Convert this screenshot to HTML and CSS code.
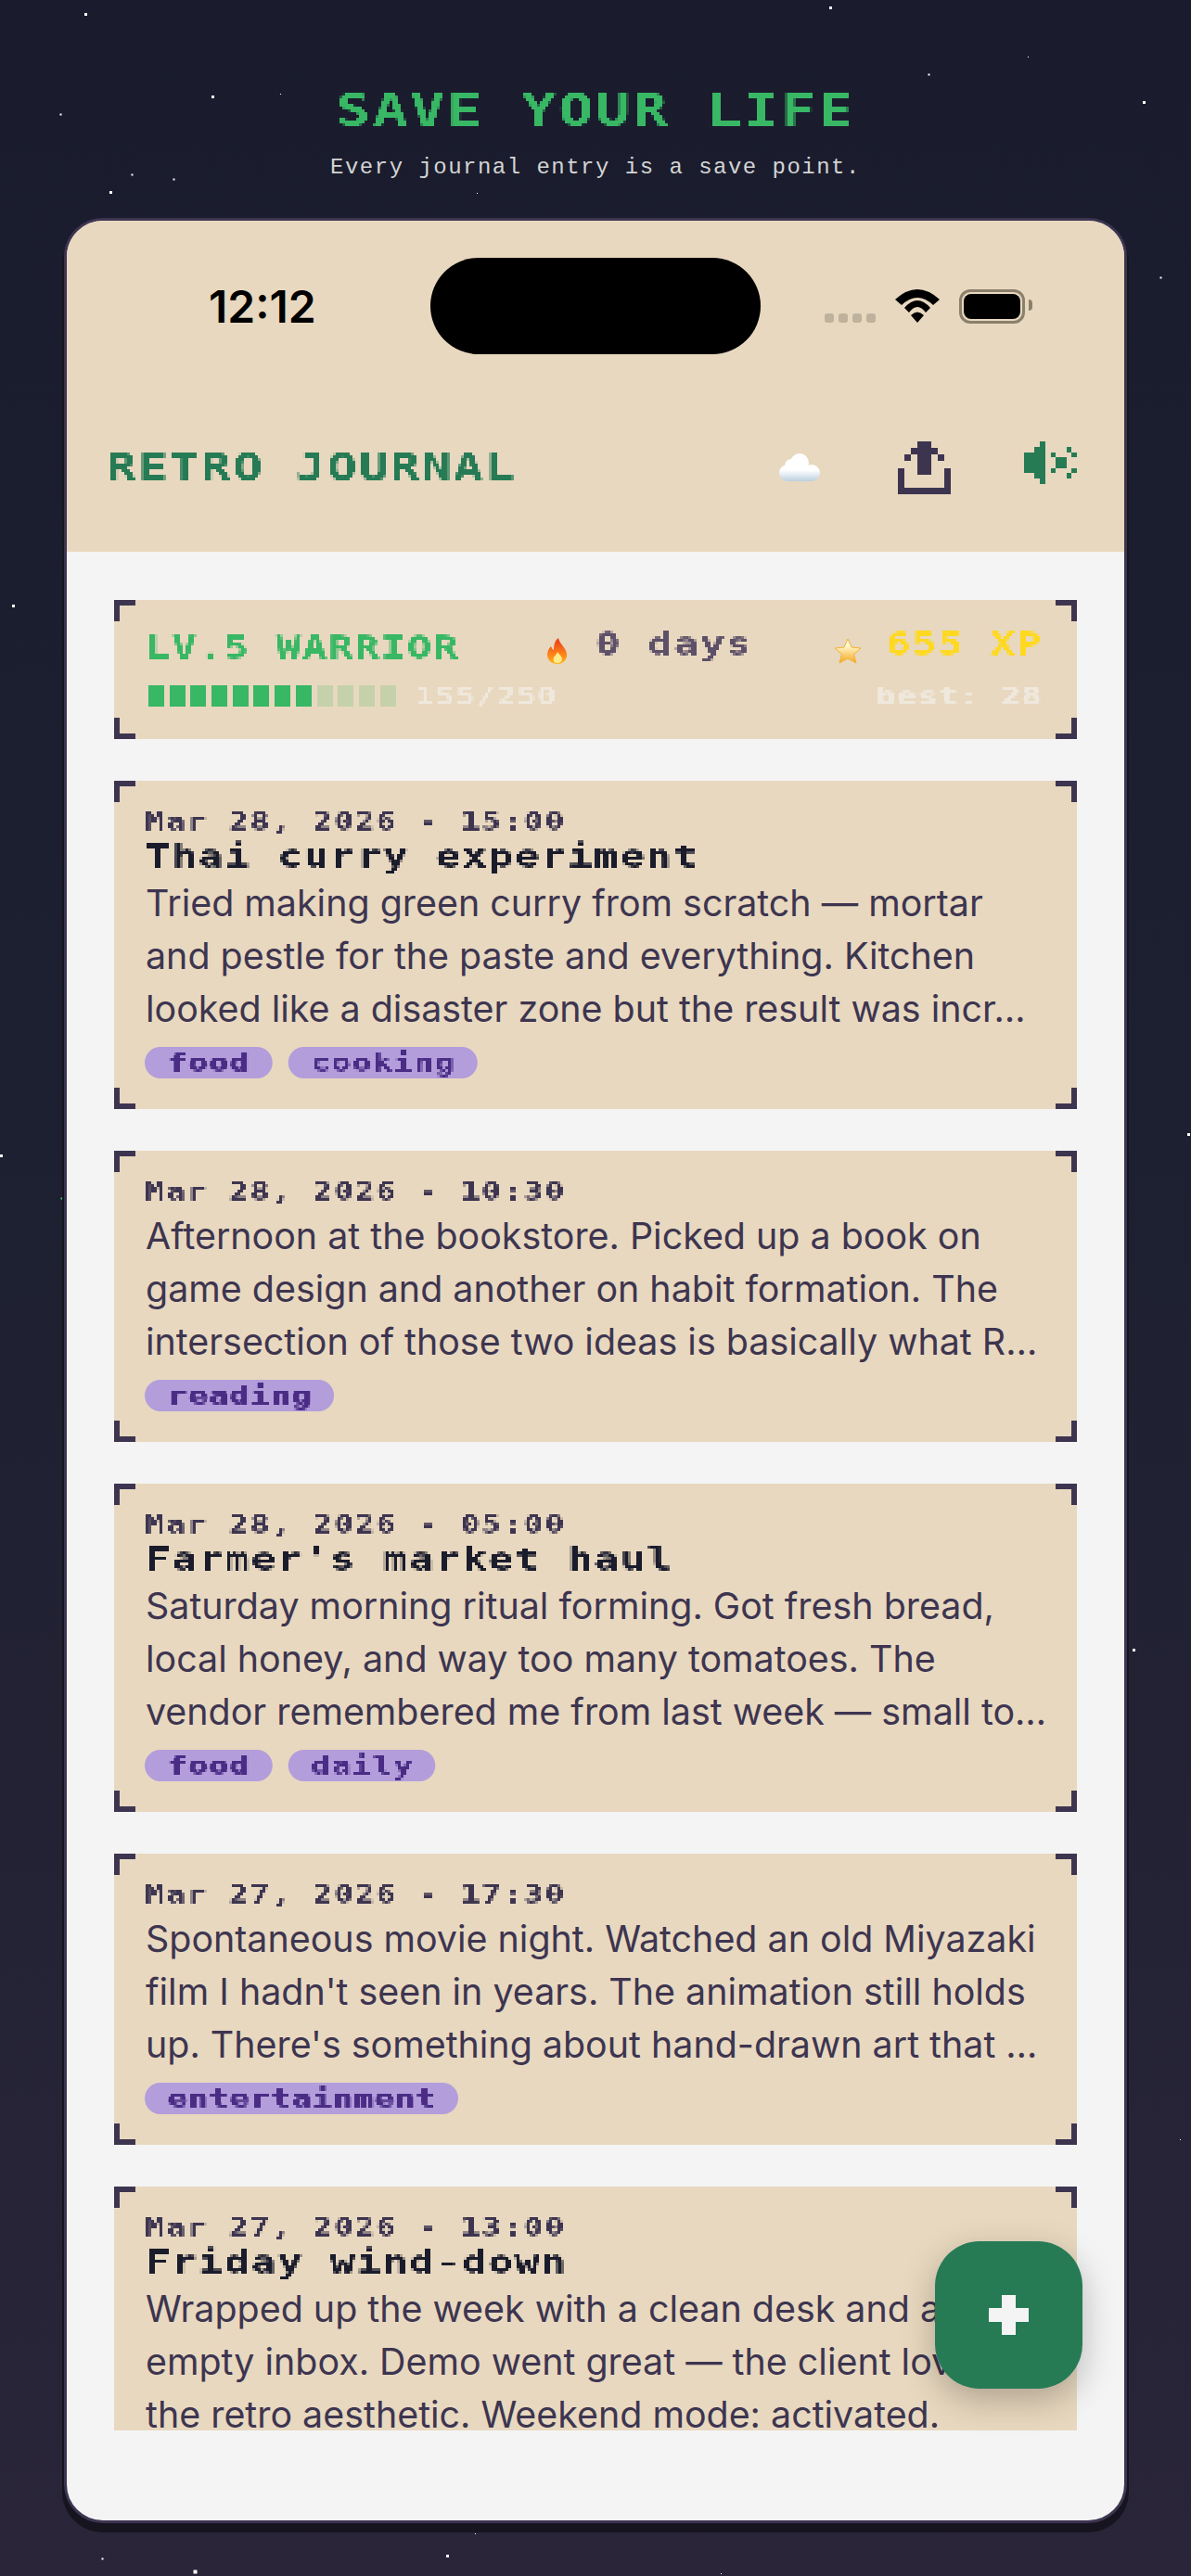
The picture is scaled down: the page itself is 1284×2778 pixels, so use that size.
FILE: index.html
```html
<!DOCTYPE html>
<html lang="en">
<head>
    <meta charset="UTF-8">
    <meta name="viewport" content="width=device-width, initial-scale=1.0">
    <title>Save Your Life</title>
    <link rel="stylesheet" href="styles.css">
</head>
<body>

    <!-- blocky look for the retro labels -->
    <svg class="defs" width="0" height="0">
        <filter id="blocks" x="0" y="0" width="100%" height="100%" color-interpolation-filters="sRGB">
            <feFlood x="1" y="1" width="1" height="1"/>
            <feComposite width="3" height="3"/>
            <feTile result="grid"/>
            <feComposite in="SourceGraphic" in2="grid" operator="in"/>
            <feMorphology operator="dilate" radius="1"/>
        </filter>
    </svg>

    <div class="stars"></div>

    <div class="intro">
        <h1 class="intro-title px">SAVE YOUR LIFE</h1>
        <p class="intro-sub">Every journal entry is a save point.</p>
    </div>

    <div class="phone">
        <header class="phone-head">
            <div class="status">
                <div class="status-time">12:12</div>
                <div class="island"></div>
                <div class="status-icons">
                    <div class="signal"><i></i><i></i><i></i><i></i></div>
                    <svg class="wifi" viewBox="0 0 48 36"><path d="M0 11Q24-11 48 11L41 17Q24 1 7 17Z"/><path d="M10 20Q24 4 38 20L33 25Q24 13 15 25Z"/><path d="M17 28Q24 21 31 28L24 36Z"/></svg>
                    <div class="battery"><div class="battery-fill"></div></div>
                </div>
            </div>
            <div class="appbar">
                <div class="brand px">RETRO JOURNAL</div>
                <div class="appbar-icons">
                    <svg class="cloud" viewBox="0 0 44 30">
                        <defs>
                            <linearGradient id="cloudfill" x1="0" y1="0" x2="0" y2="30" gradientUnits="userSpaceOnUse">
                                <stop offset="0.6" stop-color="#ffffff"/>
                                <stop offset="1" stop-color="#bcd0e0"/>
                            </linearGradient>
                        </defs>
                        <g fill="url(#cloudfill)">
                            <circle cx="22" cy="10" r="10"/>
                            <circle cx="13" cy="13" r="7"/>
                            <circle cx="9" cy="21" r="9"/>
                            <circle cx="35" cy="21" r="9"/>
                            <rect x="9" y="16" width="26" height="14"/>
                        </g>
                    </svg>
                    <svg class="upload" viewBox="0 0 8 8" shape-rendering="crispEdges"><path d="M3 0h2v5H3zM2 1h1v1H2zM5 1h1v1H5zM1 2h1v1H1zM6 2h1v1H6zM0 4h1v3h6V4h1v4H0z"/></svg>
                    <svg class="speaker" viewBox="0 0 10 8" shape-rendering="crispEdges"><path d="M0 2h2V1h1V0h1v8H3V7H2V6H0zM5 2h1v1H5zM6 3h2v2H6zM5 5h1v1H5zM8 1h1v1H8zM9 2h1v1H9zM9 5h1v1H9zM8 6h1v1H8z"/></svg>
                </div>
            </div>
        </header>

        <main class="list">
            <section class="card stats">
                <div class="stats-row">
                    <span class="level px">LV.5 WARRIOR</span>
                    <span class="stat-group streak">
                        <svg class="emoji-fire" viewBox="0 0 22 28">
                            <defs>
                                <linearGradient id="firefill" x1="0" y1="0" x2="0" y2="1">
                                    <stop offset="0" stop-color="#e8341c"/>
                                    <stop offset="0.55" stop-color="#fb7a18"/>
                                    <stop offset="1" stop-color="#ffb31a"/>
                                </linearGradient>
                            </defs>
                            <path fill="url(#firefill)" d="M12 0C13 6 20 10 21 17C22 23 17 28 11 28C5 28 0 24 0 18C0 14 2 11 4 9C5 11 5 12 7 13C7 8 8 3 12 0Z"/>
                            <path fill="#ffeb8a" d="M11 27C7 27 6 24 7 21C8 19 10 18 11 15C13 18 16 20 16 23C16 25 14 27 11 27Z"/>
                        </svg>
                        <span class="days px">0 days</span>
                    </span>
                    <span class="stat-group score">
                        <svg class="emoji-star" viewBox="0 0 30 28">
                            <defs>
                                <linearGradient id="starfill" x1="0" y1="0" x2="0" y2="1">
                                    <stop offset="0.25" stop-color="#fffbd6"/>
                                    <stop offset="1" stop-color="#f5a81c"/>
                                </linearGradient>
                            </defs>
                            <path fill="url(#starfill)" stroke="#f2b233" stroke-width="1" stroke-linejoin="round" d="M15 1L19 10L29 11L21.500 17.500L24 27L15 22L6 27L8.500 17.500L1 11L11 10Z"/>
                        </svg>
                        <span class="xp px">655 XP</span>
                    </span>
                </div>
                <div class="stats-row stats-row-low">
                    <div class="progress">
                        <div class="xpbar"><i class="on"></i><i class="on"></i><i class="on"></i><i class="on"></i><i class="on"></i><i class="on"></i><i class="on"></i><i class="on"></i><i></i><i></i><i></i><i></i></div>
                        <span class="faint px">155/250</span>
                    </div>
                    <span class="faint faint-right px">best: 28</span>
                </div>
            </section>

            <article class="card">
                <div class="entry-date px">Mar 28, 2026 - 15:00</div>
                <h2 class="entry-title px">Thai curry experiment</h2>
                <p class="entry-text">Tried making green curry from scratch — mortar and pestle for the paste and everything. Kitchen looked like a disaster zone but the result was incr…</p>
                <div class="tags"><span class="tag"><span class="px">food</span></span><span class="tag"><span class="px">cooking</span></span></div>
            </article>

            <article class="card">
                <div class="entry-date px">Mar 28, 2026 - 10:30</div>
                <p class="entry-text">Afternoon at the bookstore. Picked up a book on game design and another on habit formation. The intersection of those two ideas is basically what R…</p>
                <div class="tags"><span class="tag"><span class="px">reading</span></span></div>
            </article>

            <article class="card">
                <div class="entry-date px">Mar 28, 2026 - 05:00</div>
                <h2 class="entry-title px">Farmer's market haul</h2>
                <p class="entry-text">Saturday morning ritual forming. Got fresh bread, local honey, and way too many tomatoes. The vendor remembered me from last week — small to…</p>
                <div class="tags"><span class="tag"><span class="px">food</span></span><span class="tag"><span class="px">daily</span></span></div>
            </article>

            <article class="card">
                <div class="entry-date px">Mar 27, 2026 - 17:30</div>
                <p class="entry-text">Spontaneous movie night. Watched an old Miyazaki film I hadn't seen in years. The animation still holds up. There's something about hand-drawn art that …</p>
                <div class="tags"><span class="tag"><span class="px">entertainment</span></span></div>
            </article>

            <article class="card">
                <div class="entry-date px">Mar 27, 2026 - 13:00</div>
                <h2 class="entry-title px">Friday wind-down</h2>
                <p class="entry-text">Wrapped up the week with a clean desk and an empty inbox. Demo went great — the client loved the retro aesthetic. Weekend mode: activated.</p>
            </article>
        </main>

        <button class="fab" aria-label="New entry">
            <svg viewBox="0 0 3 3" shape-rendering="crispEdges"><path d="M1 0h1v1h1v1H2v1H1V2H0V1h1z"/></svg>
        </button>
    </div>

</body>
</html>
```

FILE: styles.css
```css
* {
    box-sizing: border-box;
}

body {
    margin: 0;
    height: 2778px;
    overflow: hidden;
    background: linear-gradient(180deg, #1a1c2d 0%, #1d2030 45%, #2a2539 100%);
    font-family: Inter, "Liberation Sans", sans-serif;
    position: relative;
}

.defs {
    position: absolute;
}

/* starfield, 1px dot repeated with box-shadow */
.stars {
    position: absolute;
    left: 0;
    top: 0;
    width: 1px;
    height: 1px;
    box-shadow:
        92px 15px 0 1px #fff, 895px 8px 0 1px #fff, 1108px 61px #fff, 1001px 80px 0 .5px #fff,
        229px 104px 0 1px #fff, 302px 101px #fff, 65px 123px 0 .5px #fff, 1233px 110px 0 1px #fff,
        142px 188px 0 .5px #fff, 187px 193px 0 .5px #fff, 119px 207px 0 1px #fff, 514px 208px #fff,
        1251px 299px 0 .5px #fff, 14px 653px 0 1px #fff, 1px 1246px 0 1px #fff, 66px 1292px 0 .5px #3bd17c,
        1281px 1223px 0 1px #fff, 1222px 1779px 0 1px #fff, 1272px 2307px #fff,
        512px 2732px #fff, 110px 2759px 0 .5px #fff, 482px 2756px 0 1px #fff, 210px 2773px 0 1.500px #fff, 777px 2775px #fff;
}

/* the labels use a wide pixel look: mono bold stretched sideways */
.px {
    font-family: "DejaVu Sans Mono", monospace;
    font-weight: bold;
    filter: url(#blocks);
}

.intro {
    position: relative;
    height: 235px;
    padding-top: 94px;
    text-align: center;
}

.intro-title {
    width: 500px;
    margin: 0 auto;
    font-size: 48px;
    line-height: 48px;
    letter-spacing: 1.870px;
    white-space: nowrap;
    color: #38b764;
    transform: scaleX(1.3);
}

.intro-sub {
    margin: 24px 0 0 0;
    font-family: "Liberation Mono", monospace;
    font-size: 24px;
    line-height: 30px;
    letter-spacing: 1.480px;
    color: #d4d4d4;
}

.phone {
    position: relative;
    width: 1146px;
    height: 2486px;
    margin: 0 auto;
    border: 3px solid #3d3550;
    border-radius: 42px;
    background-color: #f4f4f4;
    box-shadow: 0 8px 0 2px #16141f;
}

.phone-head {
    height: 357px;
    padding-top: 40px;
    background-color: #e8d8bf;
    border-radius: 39px 39px 0 0;
}

.status {
    display: grid;
    grid-template-columns: 1fr 356px 1fr;
    align-items: center;
    height: 104px;
}

.status-time {
    padding-left: 153px;
    font-size: 48px;
    font-weight: 600;
    color: #000;
}

.island {
    height: 104px;
    border-radius: 52px;
    background-color: #000;
}

.status-icons {
    display: flex;
    align-items: flex-end;
    padding-left: 69px;
}

.signal {
    display: flex;
    gap: 5px;
}

.signal i {
    width: 10px;
    height: 10px;
    border-radius: 3px;
    background-color: #bfb29c;
}

.wifi {
    width: 48px;
    height: 36px;
    margin-left: 21px;
    fill: #000;
}

.battery {
    position: relative;
    width: 71px;
    height: 37px;
    margin: 0 0 -1px 21px;
    padding: 2px;
    border: 3px solid #8a806c;
    border-radius: 12px;
}

.battery::after {
    content: '';
    position: absolute;
    right: -11px;
    top: 8px;
    width: 4px;
    height: 12px;
    border-radius: 0 6px 6px 0;
    background-color: #8a806c;
}

.battery-fill {
    height: 100%;
    border-radius: 8px;
    background-color: #000;
}

.appbar {
    display: flex;
    justify-content: space-between;
    align-items: flex-start;
    margin-top: 94px;
    padding: 0 51px 0 43px;
}

.brand {
    margin-top: 6px;
    font-size: 41px;
    line-height: 44px;
    letter-spacing: 1.450px;
    color: #267b55;
    transform: scaleX(1.3);
    transform-origin: left;
}

.appbar-icons {
    display: flex;
    align-items: flex-start;
}

.cloud {
    width: 44px;
    height: 30px;
    margin-top: 13px;
}

.upload {
    width: 57px;
    height: 57px;
    margin-left: 84px;
    fill: #3d3550;
}

.speaker {
    width: 57px;
    height: 46px;
    margin-left: 79px;
    fill: #267b55;
}

.list {
    display: flex;
    flex-direction: column;
    gap: 45px;
    height: 2026px;
    margin: 0 51px;
    padding-top: 52px;
    overflow: hidden;
}

/* corner brackets are background gradients so any card gets them */
.card {
    flex-shrink: 0;
    padding: 24px 30px 33px 34px;
    background-color: #e8d8bf;
    background-repeat: no-repeat;
    background-image:
        linear-gradient(#3d3550, #3d3550), linear-gradient(#3d3550, #3d3550),
        linear-gradient(#3d3550, #3d3550), linear-gradient(#3d3550, #3d3550),
        linear-gradient(#3d3550, #3d3550), linear-gradient(#3d3550, #3d3550),
        linear-gradient(#3d3550, #3d3550), linear-gradient(#3d3550, #3d3550);
    background-size:
        23px 6px, 6px 23px,
        23px 6px, 6px 23px,
        23px 6px, 6px 23px,
        23px 6px, 6px 23px;
    background-position:
        left top, left top,
        right top, right top,
        left bottom, left bottom,
        right bottom, right bottom;
}

.stats {
    height: 150px;
    padding: 31px 37px 0 34px;
}

.stats-row {
    display: flex;
    align-items: center;
    height: 40px;
}

.stats-row-low {
    justify-content: space-between;
    height: 30px;
    margin: 17px 0 0 3px;
}

.level, .days, .xp {
    font-size: 34px;
    line-height: 40px;
    letter-spacing: 1.200px;
    transform: scaleX(1.3);
    transform-origin: left;
}

.level {
    flex: 0 0 433px;
    color: #38b764;
}

.days {
    position: relative;
    top: -4px;
    color: #5d5068;
}

.xp {
    position: relative;
    top: -4px;
    color: #ffd91f;
    transform-origin: right;
}

.stat-group {
    display: flex;
    align-items: center;
}

.score {
    margin-left: auto;
    gap: 65px;
}

.streak {
    gap: 30px;
}

.emoji-fire {
    width: 22px;
    height: 28px;
    margin-top: 8px;
}

.emoji-star {
    width: 30px;
    height: 28px;
    margin-top: 8px;
}

.progress {
    display: flex;
    align-items: center;
    gap: 20px;
}

.xpbar {
    display: flex;
    gap: 5.700px;
}

.xpbar i {
    width: 17px;
    height: 23px;
    background-color: #c4d1ab;
}

.xpbar i.on {
    background-color: #38b764;
}

.faint {
    font-size: 27px;
    letter-spacing: 0.670px;
    color: #efe8dc;
    transform: scaleX(1.3);
    transform-origin: left;
}

.faint-right {
    letter-spacing: 1px;
    transform-origin: right;
}

.entry-date {
    margin-left: -1px;
    font-size: 27px;
    line-height: 40px;
    letter-spacing: 1.200px;
    color: #3d3550;
    transform: scaleX(1.3);
    transform-origin: left;
}

.entry-title {
    margin: -3px 0 3px 0;
    font-size: 34px;
    line-height: 40px;
    letter-spacing: 1.400px;
    color: #1a1c2c;
    transform: scaleX(1.3);
    transform-origin: left;
}

.entry-text {
    margin: 0;
    font-size: 39.400px;
    line-height: 57px;
    color: #3d3550;
}

/* whole row is stretched, so pill sizes are written before the 1.3 */
.tags {
    display: flex;
    gap: 13px;
    margin-top: 12px;
    margin-left: -1px;
    transform: scaleX(1.3);
    transform-origin: left;
}

.tag {
    height: 34px;
    padding: 0 18px 0 19px;
    border-radius: 13px / 17px;
    font-size: 27px;
    line-height: 34px;
    letter-spacing: 0.900px;
    color: #4a2c85;
    background-color: #b39ddb;
}

.tag span {
    display: inline-block;
}

.fab {
    position: absolute;
    right: 45px;
    bottom: 142px;
    display: flex;
    justify-content: center;
    align-items: center;
    width: 159px;
    height: 159px;
    border: none;
    border-radius: 48px;
    background-color: #267b55;
    box-shadow: 0 12px 36px rgba(0, 0, 0, 0.25);
}

.fab svg {
    width: 43px;
    height: 43px;
    fill: #f4f4f4;
}
```
